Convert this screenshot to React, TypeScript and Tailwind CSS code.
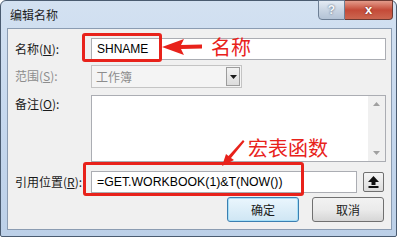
import React from "react";

const cjk = { fontFamily: '"Noto Sans CJK SC", "Liberation Sans", sans-serif' };
const lat = { fontFamily: '"Liberation Sans", "Noto Sans CJK SC", sans-serif' };

function Label({ text, k, gray }: { text: string; k: string; gray?: boolean }) {
  return (
    <div
      className={`w-[83px] shrink-0 pl-[7px] text-[12px] leading-[22px] ${gray ? "text-[#8d8d8d]" : "text-[#1a1a1a]"}`}
      style={cjk}
    >
      {text}(<span className="underline">{k}</span>):
    </div>
  );
}

export default function App() {
  return (
    <div className="relative w-[400px] h-[240px] overflow-hidden bg-white">
      {/* window */}
      <div className="flex flex-col w-[397px] h-[237px] rounded-t-[6px] rounded-b-[2px] border border-[#4a5b70] bg-gradient-to-b from-[#d3e1f1] via-[#c6d8ee] to-[#bcd0e8]">
        {/* title bar */}
        <div className="relative flex h-[27px] shrink-0 items-center">
          <span className="pl-[9px] text-[12px] text-[#1e1e1e]" style={cjk}>
            编辑名称
          </span>
          <div className="absolute right-[3px] top-[-1px] flex h-[20px]">
            <div className="flex w-[27px] items-center justify-center rounded-bl-[4px] border border-[#6d7f95] bg-gradient-to-b from-[#e4ebf4] via-[#c9d5e3] to-[#b3c3d6] text-[12px] font-bold text-white" style={lat}>
              <span className="text-[#f4f7fa] [text-shadow:0_0_2px_#3a4c62]">?</span>
            </div>
            <div className="flex w-[48px] items-center justify-center rounded-br-[4px] border border-l-0 border-[#6d3a33] bg-gradient-to-b from-[#e39a8a] via-[#c44a38] to-[#cc6650] text-[13px] font-bold" style={lat}>
              <span className="text-white [text-shadow:0_0_2px_#5b1a12]">x</span>
            </div>
          </div>
        </div>
        {/* content */}
        <div className="ml-[6px] mr-[4px] mb-[6px] flex flex-1 flex-col border border-[#8b9cb2] bg-[#f0f0f0] pr-[5px]">
          {/* row 1 */}
          <div className="mt-[9px] flex h-[22px]">
            <Label text="名称" k="N" />
            <div className="flex-1 border border-[#abadb3] bg-white pl-[5px] text-[12px] leading-[20px] text-black" style={lat}>
              SHNAME
            </div>
          </div>
          {/* row 2 */}
          <div className="mt-[5px] flex h-[23px]">
            <Label text="范围" k="S" gray />
            <div className="flex w-[151px] border border-[#c4c4c4] bg-[#f4f4f4]">
              <div className="flex-1 pl-[4px] text-[12px] leading-[21px] text-[#8d8d8d]" style={cjk}>
                工作簿
              </div>
              <div className="m-[1px] flex w-[14px] items-center justify-center border border-[#9c9c9c] bg-gradient-to-b from-[#f2f2f2] to-[#dcdcdc]">
                <svg width="7" height="4" viewBox="0 0 7 4">
                  <path d="M0 0h7L3.5 4z" fill="#1a1a1a" />
                </svg>
              </div>
            </div>
          </div>
          {/* row 3 */}
          <div className="mt-[7px] flex h-[67px]">
            <div className="w-[83px] shrink-0 pl-[7px] text-[12px] leading-[18px] text-[#1a1a1a]" style={cjk}>
              备注(<span className="underline">O</span>):
            </div>
            <div className="flex flex-1 border border-[#abadb3] bg-white">
              <div className="flex-1" />
              <div className="flex w-[17px] flex-col items-center justify-between bg-[#f0f0f0] py-[6px]">
                <svg width="7" height="4" viewBox="0 0 7 4">
                  <path d="M0 4h7L3.5 0z" fill="#a0a0a0" />
                </svg>
                <svg width="7" height="4" viewBox="0 0 7 4">
                  <path d="M0 0h7L3.5 4z" fill="#a0a0a0" />
                </svg>
              </div>
            </div>
          </div>
          {/* row 4 */}
          <div className="mt-[9px] flex h-[22px]">
            <Label text="引用位置" k="R" />
            <div className="mr-[2px] flex flex-1 items-center gap-[6px]">
              <div className="flex-1 self-stretch border border-[#abadb3] bg-white pl-[5px] text-[12.3px] leading-[20px] text-black" style={lat}>
                =GET.WORKBOOK(1)&amp;T(NOW())
              </div>
              <div className="flex h-[20px] w-[21px] items-center justify-center rounded-[2px] border border-[#707070] bg-gradient-to-b from-[#f6f6f6] to-[#dcdcdc]">
                <svg width="11" height="12" viewBox="0 0 11 12">
                  <path d="M5.5 0L11 6H7.5v3h-4V6H0z" fill="#111" />
                  <rect x="0.5" y="10" width="10" height="2" fill="#111" />
                </svg>
              </div>
            </div>
          </div>
          {/* row 5 */}
          <div className="mt-[4px] mr-[2px] flex h-[25px] justify-end gap-[13px]">
            <div className="flex w-[72px] items-center justify-center rounded-[3px] border border-[#3c7fb1] bg-gradient-to-b from-[#eaf6fd] to-[#cfe6f4] text-[12px] text-[#1a1a1a] shadow-[inset_0_0_0_1px_#a6e0f8]" style={cjk}>
              确定
            </div>
            <div className="flex w-[72px] items-center justify-center rounded-[3px] border border-[#707070] bg-gradient-to-b from-[#f2f2f2] via-[#ebebeb] to-[#d6d6d6] text-[12px] text-[#1a1a1a]" style={cjk}>
              取消
            </div>
          </div>
        </div>
      </div>

      {/* annotations */}
      <div className="absolute left-[82px] top-[33px] h-[29px] w-[80px] rounded-[3px] border-[3px] border-[#e8221b]" />
      <div className="absolute left-[83px] top-[162px] h-[34px] w-[221px] rounded-[3px] border-[3px] border-[#e8221b]" />
      <svg className="absolute left-[160px] top-[37px]" width="44" height="20" viewBox="0 0 44 20">
        <path d="M2 10L24 2L21 8L42 7.5L42 11.5L21 12L24 18z" fill="#e8221b" />
      </svg>
      <svg className="absolute left-[218px] top-[138px]" width="28" height="30" viewBox="0 0 28 30">
        <path d="M25 2L26.5 3.5L13 20L16 22L4 28L8 16L10.5 18z" fill="#e8221b" />
      </svg>
      <div className="absolute left-[211px] top-[33px] text-[20px] leading-[28px] text-[#e8221b]" style={cjk}>
        名称
      </div>
      <div className="absolute left-[248px] top-[134px] text-[20px] leading-[28px] text-[#e8221b]" style={cjk}>
        宏表函数
      </div>
    </div>
  );
}
